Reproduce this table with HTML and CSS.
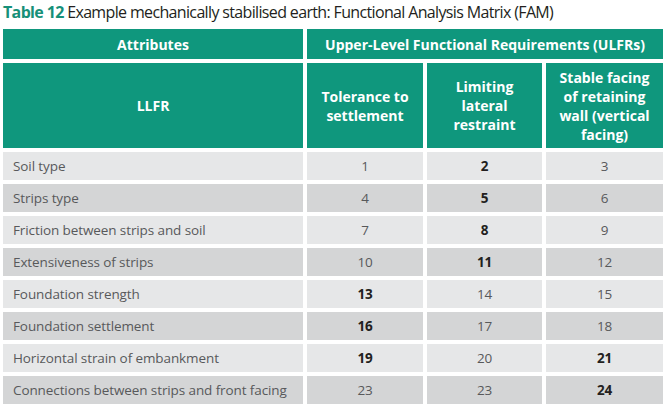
FILE: index.html
```html
<!DOCTYPE html>
<html lang="en">
<head>
<meta charset="utf-8">
<title>Table 12 FAM</title>
<link rel="stylesheet" href="styles.css">
</head>
<body>
<div class="page">
  <h1 class="title"><span class="label">Table 12</span> Example mechanically stabilised earth: Functional Analysis Matrix (FAM)</h1>
  <div class="fam">
    <div class="hd hd-attr">Attributes</div>
    <div class="hd hd-ulfr">Upper-Level Functional Requirements (ULFRs)</div>
    <div class="hd hd-sub">LLFR</div>
    <div class="hd hd-sub">Tolerance to<br>settlement</div>
    <div class="hd hd-sub">Limiting<br>lateral<br>restraint</div>
    <div class="hd hd-sub">Stable facing<br>of retaining<br>wall (vertical<br>facing)</div>

    <div class="c name">Soil type</div><div class="c num">1</div><div class="c num b">2</div><div class="c num">3</div>
    <div class="c name alt">Strips type</div><div class="c num alt">4</div><div class="c num b alt">5</div><div class="c num alt">6</div>
    <div class="c name">Friction between strips and soil</div><div class="c num">7</div><div class="c num b">8</div><div class="c num">9</div>
    <div class="c name alt">Extensiveness of strips</div><div class="c num alt">10</div><div class="c num b alt">11</div><div class="c num alt">12</div>
    <div class="c name">Foundation strength</div><div class="c num b">13</div><div class="c num">14</div><div class="c num">15</div>
    <div class="c name alt">Foundation settlement</div><div class="c num b alt">16</div><div class="c num alt">17</div><div class="c num alt">18</div>
    <div class="c name">Horizontal strain of embankment</div><div class="c num b">19</div><div class="c num">20</div><div class="c num b">21</div>
    <div class="c name alt">Connections between strips and front facing</div><div class="c num alt">23</div><div class="c num alt">23</div><div class="c num b alt">24</div>
  </div>
</div>
</body>
</html>
```

FILE: styles.css
```css
html, body {
  margin: 0;
  padding: 0;
  background: #ffffff;
}
.page {
  width: 669px;
  height: 414px;
  padding: 0 0 0 3px;
  box-sizing: border-box;
  font-family: "Open Sans", "Noto Sans", sans-serif;
}
.title {
  margin: 0;
  height: 29px;
  font-size: 16px;
  line-height: 25px;
  font-weight: 400;
  letter-spacing: -0.65px;
  color: #231f20;
  white-space: nowrap;
}
.title .label {
  color: #179079;
  font-weight: 700;
}
.fam {
  display: grid;
  grid-template-columns: 300px 116px 115px 117px;
  grid-template-rows: 30px 85px repeat(8, 28px);
  column-gap: 4px;
  row-gap: 4px;
}
.hd {
  background: #0f977d;
  color: #ffffff;
  font-weight: 700;
  font-size: 14px;
  letter-spacing: 0;
  line-height: 19px;
  display: flex;
  align-items: center;
  justify-content: center;
  text-align: center;
}
.hd-ulfr {
  grid-column: 2 / 5;
}
.c {
  background: #e6e7e8;
  color: #58595b;
  font-size: 13.5px;
  letter-spacing: -0.1px;
  display: flex;
  align-items: center;
}
.c.alt {
  background: #d4d5d6;
}
.name {
  padding-left: 10px;
}
.num {
  justify-content: center;
}
.num.b {
  font-weight: 700;
  color: #231f20;
}
```
